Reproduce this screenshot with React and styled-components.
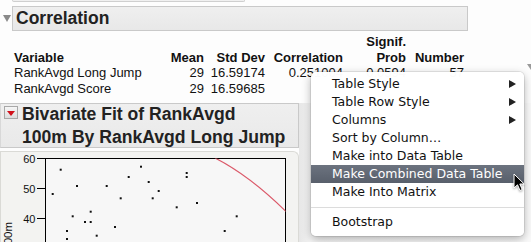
import React from "react";
import styled, { createGlobalStyle } from "styled-components";

const GlobalStyle = createGlobalStyle`
  body {
    margin: 0;
    background: #ffffff;
    font-family: "Liberation Sans", Arial, sans-serif;
    color: #1a1a1a;
  }
`;

const points = [
  [52.7, 194], [60.7, 169.7], [77, 186], [72.7, 216.3], [67, 231], [67, 239],
  [85, 222], [90.7, 211.7], [90.7, 222], [96.7, 235.7], [106.7, 186], [115, 227],
  [120.7, 198.3], [128.7, 177], [141, 166.7], [148.7, 182], [152.7, 198.3],
  [158.7, 191], [176.7, 207.3], [186.7, 173], [186.7, 177], [197, 203],
  [224.7, 231], [236.7, 216.3],
];

const menuItems = [
  { label: "Table Style", sub: true },
  { label: "Table Row Style", sub: true },
  { label: "Columns", sub: true },
  { label: "Sort by Column…" },
  { label: "Make into Data Table" },
  { label: "Make Combined Data Table", active: true },
  { label: "Make Into Matrix" },
  { separator: true },
  { label: "Bootstrap" },
];

const App = () => {
  return (
    <Page>
      <GlobalStyle />
      <Stub />

      <CorrHeaderRow>
        <Disclosure>
          <GrayTriangle />
        </Disclosure>
        <HeaderBox>Correlation</HeaderBox>
      </CorrHeaderRow>

      <TableRow>
        <CorrTable>
          <Cell />
          <Cell />
          <Cell />
          <Cell />
          <Cell $bold $right>Signif.</Cell>
          <Cell />

          <Cell $bold>Variable</Cell>
          <Cell $bold $right>Mean</Cell>
          <Cell $bold $right>Std Dev</Cell>
          <Cell $bold $right>Correlation</Cell>
          <Cell $bold $right>Prob</Cell>
          <Cell $bold $right>Number</Cell>

          <Cell>RankAvgd Long Jump</Cell>
          <Cell $right>29</Cell>
          <Cell $right>16.59174</Cell>
          <Cell $right>0.251004</Cell>
          <Cell $right>0.0594</Cell>
          <Cell $right>57</Cell>

          <Cell>RankAvgd Score</Cell>
          <Cell $right>29</Cell>
          <Cell $right>16.59685</Cell>
          <Cell />
          <Cell />
          <Cell />
        </CorrTable>
        <EdgeTriangle />
      </TableRow>

      <BivSection>
        <BivColumn>
          <BivHeader>
            <RedBox>
              <RedTriangle />
            </RedBox>
            <BivTitle>
              Bivariate Fit of RankAvgd
              <br />
              100m By RankAvgd Long Jump
            </BivTitle>
          </BivHeader>

          <PlotPanel>
            <svg width="298" height="100" viewBox="0 151 298 100">
              <defs>
                <clipPath id="frame">
                  <rect x="45.5" y="158.5" width="240" height="120" />
                </clipPath>
              </defs>
              <rect x="45.5" y="158.5" width="240" height="120" fill="#f7f7f7" stroke="#000" />
              {[60, 50, 40, 30].map((v, i) => (
                <g key={v}>
                  <line x1="37" x2="45" y1={158.5 + i * 30} y2={158.5 + i * 30} stroke="#000" />
                  <text
                    x="35.5"
                    y={162.5 + i * 30}
                    textAnchor="end"
                    fontSize="11"
                    fontFamily="Liberation Sans, Arial, sans-serif"
                    fill="#111"
                  >
                    {v}
                  </text>
                </g>
              ))}
              <text
                transform="translate(12 222) rotate(-90)"
                textAnchor="end"
                fontSize="11.5"
                fontFamily="Liberation Sans, Arial, sans-serif"
                fill="#111"
              >
                RankAvgd 100m
              </text>
              {points.map(([x, y], i) => (
                <rect key={i} x={x - 1} y={y - 1} width="2" height="2" fill="#111" />
              ))}
              <path
                d="M215 158 Q249.5 175.5 287 212.5"
                fill="none"
                stroke="#db5a6a"
                strokeWidth="1.2"
                clipPath="url(#frame)"
              />
            </svg>
          </PlotPanel>
        </BivColumn>
        <SideStrip />
      </BivSection>

      <Menu>
        {menuItems.map((item, i) =>
          item.separator ? (
            <Separator key={i} />
          ) : (
            <MenuItem key={i} $active={item.active}>
              {item.label}
              {item.sub && <SubArrow />}
            </MenuItem>
          )
        )}
      </Menu>

      <Cursor width="13" height="19" viewBox="0 0 13 19">
        <path
          d="M1 1 L1 15 L4.5 11.8 L7 17.5 L9.2 16.5 L6.8 11 L11.2 11 Z"
          fill="#000"
          stroke="#fff"
          strokeWidth="1"
          strokeLinejoin="round"
        />
      </Cursor>
    </Page>
  );
};

const Page = styled.div`
  position: relative;
  width: 531px;
  height: 242px;
  overflow: hidden;
  background: #fdfdfd;
`;

const Stub = styled.div`
  box-sizing: border-box;
  margin-left: 12px;
  width: 233px;
  height: 2px;
  background: #f0f0f0;
  border: 1px solid #cfcfcf;
  border-top: none;
  border-radius: 0 0 3px 3px;
`;

const CorrHeaderRow = styled.div`
  display: flex;
  align-items: center;
  margin-top: 4px;
  height: 25px;
`;

const Disclosure = styled.div`
  width: 12px;
  display: flex;
  justify-content: center;
`;

const GrayTriangle = styled.div`
  width: 0;
  height: 0;
  margin-left: 1px;
  border-left: 4px solid transparent;
  border-right: 4px solid transparent;
  border-top: 7px solid #8a8a8a;
`;

const HeaderBox = styled.div`
  box-sizing: border-box;
  width: 456px;
  height: 25px;
  padding-left: 3px;
  background: linear-gradient(#efefef, #e8e8e8);
  border: 1px solid #c9c9c9;
  font-size: 17.5px;
  font-weight: 700;
  line-height: 23px;
  color: #222;
`;

const TableRow = styled.div`
  display: flex;
  align-items: flex-start;
  margin-top: 3px;
  padding-left: 14px;
`;

const CorrTable = styled.div`
  display: grid;
  grid-template-columns: 150px 40px 61px 78px 63px 58px;
  grid-auto-rows: 15.5px;
  font-size: 13px;
  line-height: 15.5px;
  color: #111;
`;

const Cell = styled.div`
  white-space: nowrap;
  font-weight: ${(p) => (p.$bold ? 700 : 400)};
  text-align: ${(p) => (p.$right ? "right" : "left")};
`;

const EdgeTriangle = styled.div`
  width: 0;
  height: 0;
  margin: 30px 0 0 63px;
  border-left: 4px solid transparent;
  border-right: 4px solid transparent;
  border-top: 6px solid #9a9a9a;
`;

const BivSection = styled.div`
  display: flex;
  margin-top: 7px;
`;

const BivColumn = styled.div`
  display: flex;
  flex-direction: column;
  width: 299px;
`;

const BivHeader = styled.div`
  box-sizing: border-box;
  display: flex;
  align-items: flex-start;
  height: 45px;
  padding: 2px 0 0 3px;
  background: linear-gradient(#efefef, #e9e9e9);
  border: 1px solid #c9c9c9;
  border-left-color: #d8d8d8;
`;

const RedBox = styled.div`
  box-sizing: border-box;
  display: flex;
  justify-content: center;
  padding-top: 4px;
  width: 14px;
  height: 13px;
  margin-right: 4px;
  background: linear-gradient(#f6f6f6, #dcdcdc);
  border: 1px solid #a8a8a8;
`;

const RedTriangle = styled.div`
  width: 0;
  height: 0;
  border-left: 4px solid transparent;
  border-right: 4px solid transparent;
  border-top: 5px solid #d0101a;
`;

const BivTitle = styled.div`
  font-size: 17.6px;
  font-weight: 700;
  line-height: 23px;
  margin-top: -3px;
  color: #222;
`;

const PlotPanel = styled.div`
  box-sizing: border-box;
  margin-top: 3px;
  height: 100px;
  background: #f3f3f1;
  border: 1px solid #dadad6;
  border-bottom: none;
  border-radius: 0 6px 0 0;
  overflow: hidden;

  svg {
    display: block;
    margin: -1px 0 0 -1px;
  }
`;

const SideStrip = styled.div`
  flex: 1;
  height: 140px;
  background: linear-gradient(90deg, #e6e6e6, #f6f6f6 12px, #fafafa);
`;

const Menu = styled.div`
  position: absolute;
  left: 311px;
  top: 72px;
  box-sizing: border-box;
  width: 213px;
  height: 164px;
  padding: 3px 0 5px;
  background: rgba(255, 255, 255, 0.98);
  border-radius: 5px;
  box-shadow: 0 0 0 1px rgba(0, 0, 0, 0.08), 0 3px 10px rgba(0, 0, 0, 0.3);
  font-family: "DejaVu Sans", "Liberation Sans", sans-serif;
  font-size: 12.5px;
`;

const MenuItem = styled.div`
  position: relative;
  height: 18px;
  line-height: 18px;
  padding-left: 21px;
  white-space: nowrap;
  color: ${(p) => (p.$active ? "#ffffff" : "#111111")};
  background: ${(p) =>
    p.$active ? "linear-gradient(#6c737f, #585f6b)" : "transparent"};
`;

const SubArrow = styled.span`
  position: absolute;
  right: 8px;
  top: 5px;
  width: 0;
  height: 0;
  border-top: 4px solid transparent;
  border-bottom: 4px solid transparent;
  border-left: 7px solid #222;
`;

const Separator = styled.div`
  height: 1px;
  margin: 6px 0 5px;
  background: #dcdcdc;
`;

const Cursor = styled.svg`
  position: absolute;
  left: 513px;
  top: 173px;
  filter: drop-shadow(0 1px 1px rgba(0, 0, 0, 0.35));
`;

export default App;
